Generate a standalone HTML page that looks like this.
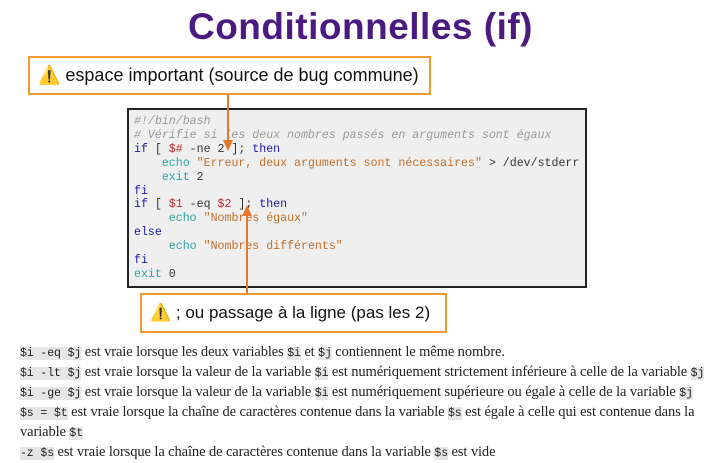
<!DOCTYPE html>
<html><head><meta charset="utf-8"><style>
body{margin:0;width:721px;height:462px;background:#fff;position:relative;overflow:hidden;font-family:"Liberation Sans",sans-serif}
.t{position:absolute;left:0;width:721px;top:6px;text-align:center;font-weight:bold;font-size:37px;color:#4a1a80;letter-spacing:0.5px}
.call{position:absolute;border:2px solid #f29a2e;background:#fff;font-size:18px;color:#111;box-sizing:border-box;padding-left:8px;display:flex;align-items:center;white-space:nowrap}
.code{position:absolute;left:127px;top:108px;width:460px;height:180px;border:2px solid #222;background:#efefef;box-sizing:border-box;padding:5px 0 0 5px;font-family:"Liberation Mono",monospace;font-size:11.6px;line-height:13.9px;white-space:pre;color:#333}
.c{color:#999;font-style:italic}.k{color:#1a1aa6}.v{color:#c0282a}.s{color:#c0702a}.b{color:#2aa6a6}
.txt{position:absolute;left:20px;top:343px;font-family:"Liberation Serif",serif;font-size:14.5px;line-height:18px;color:#222;white-space:nowrap;letter-spacing:-0.1px}
.m{font-family:"Liberation Mono",monospace;font-size:11.5px;background:#e6e6e6}
</style></head><body>
<div class="t">Conditionnelles (if)</div>
<div class="code"><span class="c">#!/bin/bash
# Vérifie si les deux nombres passés en arguments sont égaux</span>
<span class="k">if</span> [ <span class="v">$#</span> -ne 2 ]; <span class="k">then</span>
    <span class="b">echo</span> <span class="s">"Erreur, deux arguments sont nécessaires"</span> &gt; /dev/stderr
    <span class="b">exit</span> 2
<span class="k">fi</span>
<span class="k">if</span> [ <span class="v">$1</span> -eq <span class="v">$2</span> ]; <span class="k">then</span>
     <span class="b">echo</span> <span class="s">"Nombres égaux"</span>
<span class="k">else</span>
     <span class="b">echo</span> <span class="s">"Nombres différents"</span>
<span class="k">fi</span>
<span class="b">exit</span> 0</div>
<svg style="position:absolute;left:0;top:0" width="721" height="462">
<line x1="228" y1="94" x2="228" y2="142" stroke="#e8782a" stroke-width="2"/>
<polygon points="223,140 233,140 228,151" fill="#e8782a"/>
<line x1="247" y1="293" x2="247" y2="214" stroke="#e8782a" stroke-width="2"/>
<polygon points="242,216 252,216 247,205" fill="#e8782a"/>
</svg>
<div class="call" style="left:28px;top:56px;width:403px;height:39px">⚠️&nbsp;espace important (source de bug commune)</div>
<div class="call" style="left:140px;top:293px;width:307px;height:40px;font-size:17px">⚠️&nbsp;; ou passage à la ligne (pas les 2)</div>
<div class="txt">
<span class="m">$i -eq $j</span> est vraie lorsque les deux variables <span class="m">$i</span> et <span class="m">$j</span> contiennent le même nombre.<br>
<span class="m">$i -lt $j</span> est vraie lorsque la valeur de la variable <span class="m">$i</span> est numériquement strictement inférieure à celle de la variable <span class="m">$j</span><br>
<span class="m">$i -ge $j</span> est vraie lorsque la valeur de la variable <span class="m">$i</span> est numériquement supérieure ou égale à celle de la variable <span class="m">$j</span><br>
<span class="m">$s = $t</span> est vraie lorsque la chaîne de caractères contenue dans la variable <span class="m">$s</span> est égale à celle qui est contenue dans la<br>
variable <span class="m">$t</span><br>
<span class="m">-z $s</span> est vraie lorsque la chaîne de caractères contenue dans la variable <span class="m">$s</span> est vide
</div>
</body></html>
